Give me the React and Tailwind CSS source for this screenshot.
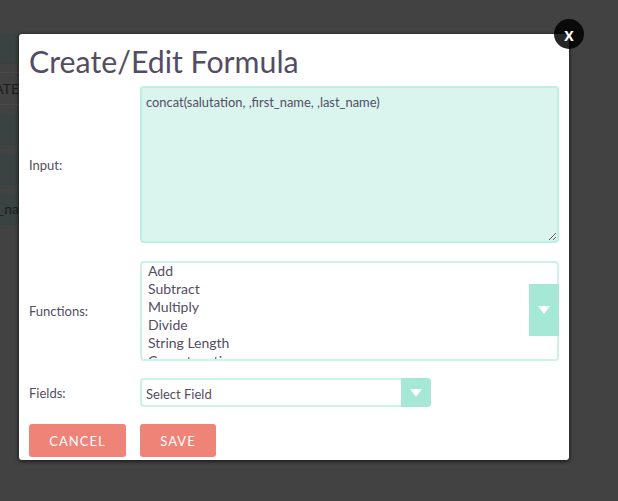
import React from 'react';

const functions = ['Add', 'Subtract', 'Multiply', 'Divide', 'String Length', 'Concatenation', 'Substring'];

function Arrow() {
  return <div className="w-0 h-0 border-x-[6.5px] border-x-transparent border-t-[8px] border-t-white" />;
}

function BackgroundStrip() {
  return (
    <div className="w-[19px] shrink-0 pt-[33px] overflow-hidden flex flex-col text-sm text-[#1d1d1d]">
      <div className="h-[31px] bg-[#3a4341] border-b border-[#35433f]" />
      <div className="h-[9px] border-b border-[#4a4a4a]" />
      <div className="h-[32px] border-b border-[#4a4a4a] flex items-center justify-end whitespace-nowrap">ATE</div>
      <div className="h-[8px]" />
      <div className="h-[32px] bg-[#3a4341] border-b border-[#35433f]" />
      <div className="h-[8px]" />
      <div className="h-[32px] bg-[#3a4341] border-b border-[#35433f]" />
      <div className="h-[8px]" />
      <div className="h-[32px] bg-[#3a4341] border-b border-[#35433f] flex items-center justify-end whitespace-nowrap">_na</div>
    </div>
  );
}

export default function App() {
  return (
    <div className="h-[501px] w-[618px] bg-[#424242] flex overflow-hidden font-['Lato',sans-serif] text-[#534d64]">
      <BackgroundStrip />

      <div className="relative w-[550px] h-[426px] mt-[34px] px-[10px] bg-white rounded-[3px] shadow-[0_1px_4px_rgba(0,0,0,0.8)]">
        <button className="absolute -top-[15px] -right-[15px] w-[30px] h-[30px] rounded-full bg-black/85 text-white font-bold text-[18px] leading-none pb-[1px] flex items-center justify-center font-['Lato',sans-serif]">
          x
        </button>

        <h1 className="h-[52px] pt-[7px] text-[30.3px] leading-[40px] font-normal">Create/Edit Formula</h1>

        <div className="flex items-center h-[157px]">
          <label className="w-[111px] shrink-0 pt-[2px] text-[13px]">Input:</label>
          <textarea
            readOnly
            value="concat(salutation, ,first_name, ,last_name)"
            className="w-[419px] h-[157px] px-[4px] py-[5px] bg-[#d9f5ee] border-2 border-[#bdefe2] rounded-[4px] text-[12.9px] leading-[18px] outline-none"
          />
        </div>

        <div className="flex items-center h-[100px] mt-[18px]">
          <label className="w-[111px] shrink-0 pt-[2px] text-[13px]">Functions:</label>
          <div className="relative w-[419px] h-[100px] border-2 border-[#ccf3e9] rounded-[4px] text-sm leading-[18px]">
            <div className="h-full pl-[6px] overflow-hidden">
              <div className="-mt-px">
                {functions.map((name) => (
                  <div key={name} className="h-[18px]">{name}</div>
                ))}
              </div>
            </div>
            <div className="absolute -right-[2px] top-[21px] w-[30px] h-[52px] bg-[#a5e8d6] flex items-center justify-center">
              <Arrow />
            </div>
          </div>
        </div>

        <div className="flex items-center h-[29px] mt-[17px]">
          <label className="w-[111px] shrink-0 pt-[2px] text-[13px]">Fields:</label>
          <div className="w-[291px] h-[29px] border-y-2 border-l-2 border-[#ccf3e9] rounded-[4px] flex items-center">
            <span className="flex-1 pl-[4px] pt-[5px] text-[13px]">Select Field</span>
            <div className="w-[30px] h-[29px] bg-[#a5e8d6] rounded-r-[4px] flex items-center justify-center">
              <Arrow />
            </div>
          </div>
        </div>

        <div className="flex mt-[17px]">
          <button className="w-[97px] h-[33px] pt-[2px] bg-[#f08377] text-white text-[13px] tracking-[1px] rounded-[3px]">CANCEL</button>
          <button className="w-[76px] h-[33px] pt-[2px] ml-[14px] bg-[#f08377] text-white text-[13px] tracking-[1px] rounded-[3px]">SAVE</button>
        </div>
      </div>
    </div>
  );
}
